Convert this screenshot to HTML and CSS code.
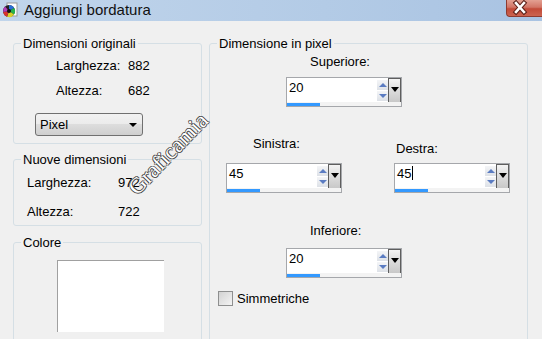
FILE: index.html
```html
<!DOCTYPE html>
<html lang="it">
<head>
    <meta charset="UTF-8">
    <title>Aggiungi bordatura</title>
    <link rel="stylesheet" href="styles.css">
</head>
<body>
<div class="titlebar">
    <span class="app-icon">
        <svg width="16" height="16" viewBox="0 0 16 16">
            <rect x="5" y="1" width="10" height="13" fill="#fff" stroke="#9a9a9a"/>
            <circle cx="7" cy="9" r="6" fill="#222"/>
            <path d="M7 9 L7 3 A6 6 0 0 1 12.2 6z" fill="#2a6fd6"/>
            <path d="M7 9 L12.2 6 A6 6 0 0 1 12 12.5z" fill="#27b34a"/>
            <path d="M7 9 L12 12.5 A6 6 0 0 1 5 14.7z" fill="#d9d22a"/>
            <path d="M7 9 L5 14.7 A6 6 0 0 1 1.2 10z" fill="#d8342c"/>
            <path d="M7 9 L1.2 10 A6 6 0 0 1 3 4.5z" fill="#b43cb8"/>
            <circle cx="7" cy="9" r="2" fill="#111"/>
        </svg>
    </span>
    <span class="title">Aggiungi bordatura</span>
    <span class="close">
        <svg width="36" height="17" viewBox="0 0 36 17">
            <path d="M9 3 L17 12 M17 3 L9 12" stroke="#5a1f17" stroke-width="4.6" stroke-linecap="square"/>
            <path d="M9 3 L17 12 M17 3 L9 12" stroke="#fff" stroke-width="2.6" stroke-linecap="square"/>
        </svg>
    </span>
</div>

<div class="dialog">
    <div class="left-col">
        <fieldset class="group orig">
            <legend>Dimensioni originali</legend>
            <div class="info">
                <span>Larghezza:</span><span>882</span>
                <span>Altezza:</span><span>682</span>
            </div>
            <div class="combo">
                <span>Pixel</span>
                <span class="combo-arrow"></span>
            </div>
        </fieldset>

        <fieldset class="group newdim">
            <legend>Nuove dimensioni</legend>
            <div class="info">
                <span>Larghezza:</span><span>972</span>
                <span>Altezza:</span><span>722</span>
            </div>
        </fieldset>

        <fieldset class="group colore">
            <legend>Colore</legend>
            <div class="swatch"></div>
        </fieldset>
    </div>

    <fieldset class="group pixels">
        <legend>Dimensione in pixel</legend>

        <div class="field center">
            <label class="lbl">Superiore:</label>
            <div class="spin">
                <div class="spin-main">
                    <span class="spin-text">20</span>
                    <span class="spin-arrows"><i class="up"></i><i class="down"></i></span>
                    <span class="spin-drop"></span>
                </div>
                <div class="spin-bar"><span class="spin-fill"></span></div>
            </div>
        </div>

        <div class="side-row">
            <div class="field left">
                <label class="lbl">Sinistra:</label>
                <div class="spin">
                    <div class="spin-main">
                        <span class="spin-text">45</span>
                        <span class="spin-arrows"><i class="up"></i><i class="down"></i></span>
                        <span class="spin-drop"></span>
                    </div>
                    <div class="spin-bar"><span class="spin-fill"></span></div>
                </div>
            </div>
            <div class="field right">
                <label class="lbl">Destra:</label>
                <div class="spin">
                    <div class="spin-main">
                        <span class="spin-text">45<span class="caret"></span></span>
                        <span class="spin-arrows"><i class="up"></i><i class="down"></i></span>
                        <span class="spin-drop"></span>
                    </div>
                    <div class="spin-bar"><span class="spin-fill"></span></div>
                </div>
            </div>
        </div>

        <div class="field center bottom">
            <label class="lbl">Inferiore:</label>
            <div class="spin">
                <div class="spin-main">
                    <span class="spin-text">20</span>
                    <span class="spin-arrows"><i class="up"></i><i class="down"></i></span>
                    <span class="spin-drop"></span>
                </div>
                <div class="spin-bar"><span class="spin-fill"></span></div>
            </div>
        </div>

        <div class="check">
            <span class="box"></span>
            <span>Simmetriche</span>
        </div>
    </fieldset>
</div>

<div class="watermark">Graficamia</div>
</body>
</html>
```

FILE: styles.css
```css
body {
    margin: 0;
    height: 339px;
    overflow: hidden;
    position: relative;
    background-color: #f0f0f0;
    font-family: "Liberation Sans", Arial, sans-serif;
    font-size: 13px;
    line-height: 15px;
    color: #000;
}

/* title bar */
.titlebar {
    display: flex;
    align-items: flex-start;
    height: 21px;
    background: linear-gradient(to right, #c1d5eb, #b3cbe6 60%, #a9c3e2);
}

.app-icon {
    width: 16px;
    height: 16px;
    margin: 2px 0 0 2px;
}

.title {
    margin-left: 6px;
    font-size: 15px;
    line-height: 20px;
    color: #111;
}

.close {
    margin-left: auto;
    width: 36px;
    height: 17px;
    border: 1px solid #8e3b30;
    border-top: 0;
    border-right: 0;
    border-radius: 0 0 0 4px;
    background: linear-gradient(#e3a092, #d27566 45%, #c24a38 55%, #cc6450);
    box-sizing: border-box;
}

.close svg {
    display: block;
}

/* dialog body */
.dialog {
    display: flex;
    gap: 7px;
    padding: 15px 0 0 13px;
}

.left-col {
    display: flex;
    flex-direction: column;
    width: 189px;
}

.group {
    margin: 0;
    padding: 0;
    min-width: 0;
    border: 1px solid #d5dfe5;
    border-radius: 3px;
}

.group legend {
    margin-left: 7px;
    padding: 0 2px;
    line-height: 15px;
}

.info {
    display: grid;
    row-gap: 10px;
}

.orig {
    padding: 7px 0 7px 0;
}

.orig .info {
    margin-left: 42px;
    grid-template-columns: 72px auto;
}

.newdim {
    margin-top: 8px;
    padding: 8px 0 6px 0;
}

.newdim .info {
    margin-left: 13px;
    grid-template-columns: 91px auto;
    row-gap: 14px;
}

.combo {
    display: flex;
    align-items: center;
    justify-content: space-between;
    width: 108px;
    height: 23px;
    margin: 15px 0 0 21px;
    padding: 0 5px 0 4px;
    box-sizing: border-box;
    border: 1px solid #707070;
    border-radius: 3px;
    background: linear-gradient(#f2f2f2, #ebebeb 49%, #dddddd 50%, #cfcfcf);
}

.combo-arrow {
    width: 0;
    height: 0;
    border-left: 4px solid transparent;
    border-right: 4px solid transparent;
    border-top: 4px solid #000;
}

.colore {
    margin-top: 9px;
    padding: 10px 0 30px 0;
}

.swatch {
    width: 107px;
    height: 72px;
    margin-left: 43px;
    box-sizing: border-box;
    background-color: #fff;
    border-left: 1px solid #a0a0a0;
    border-top: 1px solid #a0a0a0;
}

/* pixel group */
.pixels {
    width: 319px;
    box-sizing: border-box;
    padding: 0 0 32px 0;
}

.field {
    display: flex;
    flex-direction: column;
    align-items: flex-start;
}

.field.center {
    margin: 3px 0 0 76px;
}

.field.center .lbl {
    padding-left: 24px;
    margin-bottom: 8px;
}

.field.bottom {
    margin-top: 30px;
}

.field.bottom .lbl {
    margin-bottom: 10px;
}

.side-row {
    display: flex;
    gap: 52px;
    margin: 29px 0 0 16px;
}

.field.left .lbl {
    padding-left: 27px;
    margin-bottom: 12px;
}

.field.right .lbl {
    padding-left: 2px;
    margin: 5px 0 7px;
}

.spin {
    display: flex;
    flex-direction: column;
    width: 116px;
    height: 30px;
    box-sizing: border-box;
    border: 1px solid #a5a7ab;
    background-color: #fff;
}

.spin-main {
    display: flex;
    height: 24px;
}

.spin-text {
    flex: 1;
    padding: 2px 0 0 2px;
    display: flex;
    align-items: flex-start;
}

.caret {
    display: inline-block;
    width: 1px;
    height: 14px;
    margin-left: 1px;
    background-color: #000;
}

.spin-arrows {
    display: flex;
    flex-direction: column;
    gap: 1px;
    width: 11px;
    padding-top: 2px;
}

.spin-arrows i {
    display: flex;
    align-items: center;
    justify-content: center;
    height: 10px;
    background: linear-gradient(#f4f5f7, #dde1e7);
}

.spin-arrows i::after {
    content: "";
    width: 0;
    height: 0;
    border-left: 4px solid transparent;
    border-right: 4px solid transparent;
}

.spin-arrows .up::after {
    border-bottom: 4px solid #5b7cc2;
}

.spin-arrows .down::after {
    border-top: 4px solid #5b7cc2;
}

.spin-drop {
    display: flex;
    justify-content: center;
    width: 13px;
    height: 25px;
    box-sizing: border-box;
    border: 1px solid #5e5e5e;
    background: linear-gradient(#f4f4f4, #e0e0e0 40%, #c8c8c8);
}

.spin-drop::after {
    content: "";
    margin-top: 8px;
    width: 0;
    height: 0;
    border-left: 4px solid transparent;
    border-right: 4px solid transparent;
    border-top: 5px solid #000;
}

.spin-bar {
    height: 4px;
    padding-top: 1px;
    box-sizing: border-box;
    background-color: #f3f3f3;
}

.spin-fill {
    display: block;
    width: 33px;
    height: 3px;
    background-color: #3399ff;
}

.check {
    display: flex;
    align-items: center;
    gap: 4px;
    margin: 13px 0 0 8px;
}

.check .box {
    width: 13px;
    height: 13px;
    border: 1px solid #8e8f8f;
    background: linear-gradient(135deg, #d2d2d2, #f4f4f4);
}

/* watermark lying over the dialog */
.watermark {
    position: absolute;
    left: 114px;
    top: 138px;
    width: 120px;
    font-family: "Liberation Serif", "Times New Roman", serif;
    font-size: 22px;
    line-height: 20px;
    letter-spacing: 0.5px;
    color: #fff;
    text-shadow: 1px 0 0 #444, -1px 0 0 #444, 0 1px 0 #444, 0 -1px 0 #444;
    transform: rotate(-46deg);
    white-space: nowrap;
}
```
